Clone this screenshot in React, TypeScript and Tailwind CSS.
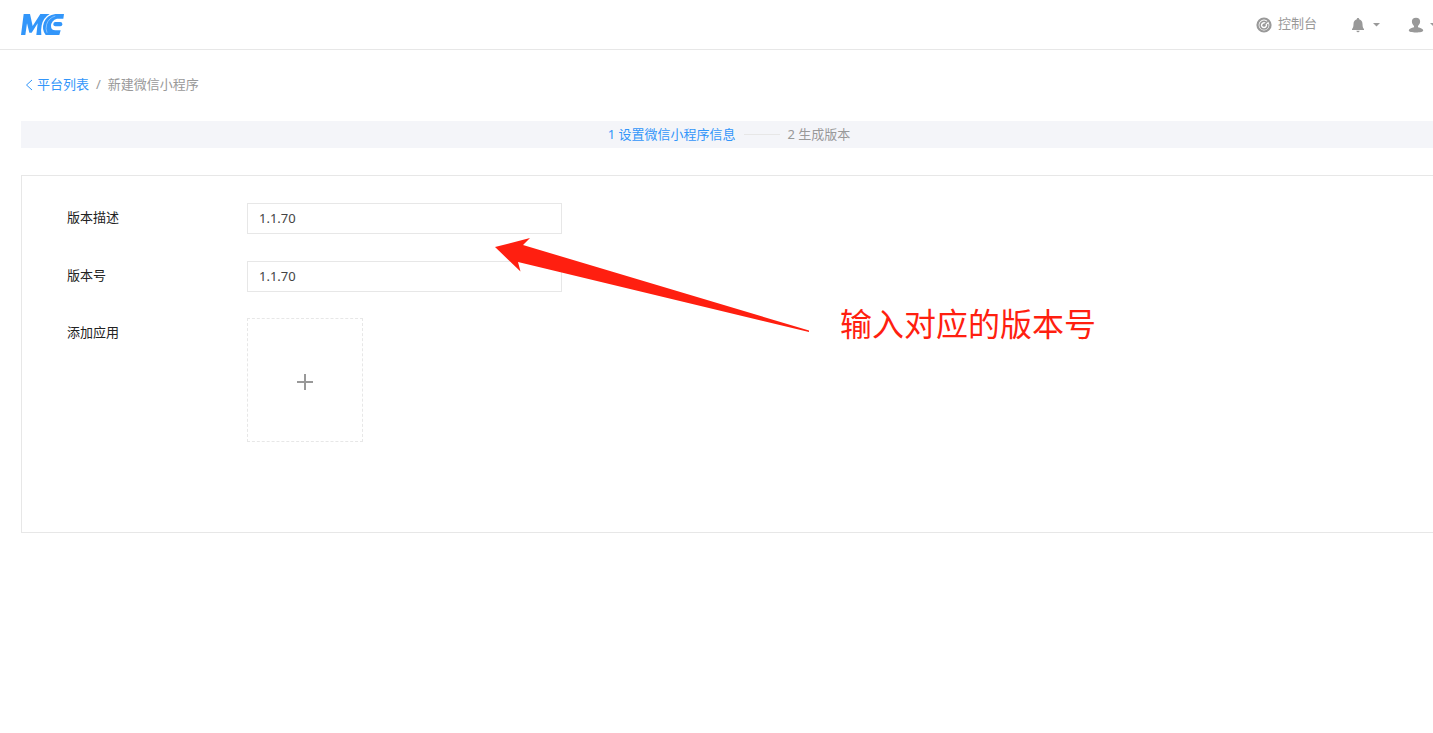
import { useState } from 'react';

const STEPS = ['1 设置微信小程序信息', '2 生成版本'];

function Logo() {
  return (
    <svg viewBox="0 0 129 63" className="h-[21px] w-[43px]" aria-hidden="true">
      <path
        fill="#3296fa"
        d="M8 0H27L35 36L58 0H86Q66 12 62 34Q59 48 61 63H46L50 28L32 56H25L18 28L13 63H0Z"
      />
      <path
        fill="#3296fa"
        d="M129 0H103Q78 3 69 25Q61 47 74 63H115L119 49H103Q90 49 90 36Q91 19 108 14H127Z"
      />
      <path d="M103 6Q83 12 77 31Q73 45 78 56" fill="none" stroke="#fff" strokeOpacity="0.6" strokeWidth="2" />
      <rect x="97" y="24" width="27" height="13" rx="6" fill="#3296fa" />
    </svg>
  );
}

function GaugeIcon() {
  return (
    <svg viewBox="0 0 16 16" className="size-4" fill="none" aria-hidden="true">
      <circle cx="8" cy="8" r="6.5" stroke="#999" strokeWidth="2.2" />
      <path d="M10.2 5A3.9 3.9 0 1 0 11.7 7" stroke="#999" strokeWidth="1.5" />
      <circle cx="8" cy="8.2" r="1.6" fill="#999" />
      <path d="M8 8L11.8 4.2" stroke="#999" strokeWidth="1.4" />
    </svg>
  );
}

function BellIcon() {
  return (
    <svg viewBox="0 0 14 16" className="h-4 w-3.5" fill="#999" aria-hidden="true">
      <path d="M7 1C7.8 1 8.2 1.5 8.2 2.2C10.4 2.8 11.4 4.5 11.5 7C11.6 10 12 11.2 13 12V13H1V12C2 11.2 2.4 10 2.5 7C2.6 4.5 3.6 2.8 5.8 2.2C5.8 1.5 6.2 1 7 1Z" />
      <path d="M5.3 13.8H8.7Q8.3 15.3 7 15.3Q5.7 15.3 5.3 13.8Z" />
    </svg>
  );
}

function UserIcon() {
  return (
    <svg viewBox="0 0 16 16" className="size-4" fill="#999" aria-hidden="true">
      <path d="M8 .8C10.7.8 12.2 2.4 12.1 4.6C12 6.7 11.2 8 10 8.9V10.2C12.5 10.9 15 11.5 15.2 13.2C15.4 14.8 12 15.4 8 15.4S.6 14.8.8 13.2C1 11.5 3.5 10.9 6 10.2V8.9C4.8 8 4 6.7 3.9 4.6C3.8 2.4 5.3.8 8 .8Z" />
    </svg>
  );
}

function Caret() {
  return (
    <svg viewBox="0 0 7 4" className="h-1 w-[7px] shrink-0" fill="#999" aria-hidden="true">
      <path d="M0 0H7L3.5 3.6Z" />
    </svg>
  );
}

function VersionField({ id, label }: { id: string; label: string }) {
  const [value, setValue] = useState('1.1.70');

  return (
    <div className="flex items-start">
      <label htmlFor={id} className="w-[180px] shrink-0 leading-7">
        {label}
      </label>
      <input
        id={id}
        value={value}
        onChange={(e) => setValue(e.target.value)}
        className="h-[31px] w-[315px] border border-[#e7e7e7] bg-white px-[11px] pb-0.5 text-[#444] outline-none"
      />
    </div>
  );
}

export default function App() {
  return (
    <div className="overflow-hidden bg-white font-['Noto_Sans','Noto_Sans_CJK_SC',sans-serif] text-[13px] text-[#222]">
      <header className="flex h-[50px] items-center justify-between border-b border-[#e7e7e7] pl-[21px] text-[#999]">
        <a href="#" aria-label="ME">
          <Logo />
        </a>
        <nav className="-mr-1 flex items-center">
          <a href="#" className="mr-[34px] flex items-center gap-1.5">
            <GaugeIcon />
            <span className="pb-0.5">控制台</span>
          </a>
          <button type="button" aria-label="通知" className="mr-7 flex items-center gap-2">
            <BellIcon />
            <Caret />
          </button>
          <button type="button" aria-label="用户" className="flex items-center gap-1.5">
            <UserIcon />
            <Caret />
          </button>
        </nav>
      </header>

      <main className="-mr-1 pl-[21px]">
        <nav className="flex h-[71px] items-center pb-0.5 pl-1">
          <a href="#" className="flex items-center gap-1 text-[#3296fa]">
            <svg viewBox="0 0 8 12" className="h-3 w-2" fill="none" stroke="#3296fa" aria-hidden="true">
              <path d="M7 1L1.5 6L7 11" />
            </svg>
            平台列表
          </a>
          <span className="px-[7px] text-[#999]">/</span>
          <span className="text-[#999]">新建微信小程序</span>
        </nav>

        <ol className="flex h-[27px] items-center justify-center bg-[#f4f5f9]">
          <li className="text-[#3296fa]">{STEPS[0]}</li>
          <li className="mx-2 h-px w-9 bg-[#e7e7e7]" role="separator" />
          <li className="text-[#999]">{STEPS[1]}</li>
        </ol>

        <section className="relative mt-[27px] border border-[#e7e7e7] pt-[27px] pb-[90px] pl-[45px]">
          <form className="flex flex-col">
            <div className="flex flex-col gap-[27px]">
              <VersionField id="version-desc" label="版本描述" />
              <VersionField id="version-no" label="版本号" />
            </div>
            <div className="mt-[26px] flex items-start">
              <span id="add-app" className="w-[180px] shrink-0 leading-7">
                添加应用
              </span>
              <button
                type="button"
                aria-labelledby="add-app"
                className="flex h-[124px] w-[116px] items-center justify-center border border-dashed border-[#e7e7e7] pt-1"
              >
                <svg viewBox="0 0 16 16" className="size-4" stroke="#999" strokeWidth="2" aria-hidden="true">
                  <path d="M8 0V16M0 8H16" />
                </svg>
              </button>
            </div>
          </form>

          {/* Hint drawn over the form */}
          <div className="pointer-events-none absolute top-[62px] left-[473px] flex items-start gap-[31px]">
            <svg viewBox="0 0 314 95" className="h-[95px] w-[314px]" fill="#ff1f10" aria-hidden="true">
              <path d="M0 9L35 0L28 7L314 92.5V94L23 24L25.5 33.5Z" />
            </svg>
            <p className="pt-[70px] text-[32px] leading-none whitespace-nowrap text-[#ff1f10]">
              输入对应的版本号
            </p>
          </div>
        </section>
      </main>
    </div>
  );
}
